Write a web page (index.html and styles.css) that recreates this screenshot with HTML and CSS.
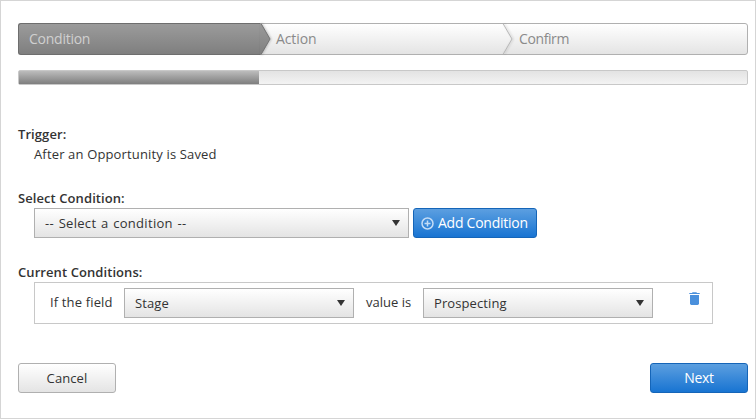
FILE: index.html
```html
<!DOCTYPE html>
<html lang="en">
<head>
    <meta charset="UTF-8" />
    <meta name="viewport" content="width=device-width, initial-scale=1" />
    <title>Condition</title>
    <link rel="stylesheet" href="styles.css">
</head>
<body>
<main class="wizard">
    <ol class="steps">
        <li class="step active">
            <span>Condition</span>
            <svg class="step-arrow" width="14" height="32" viewBox="0 0 14 32">
                <path d="M0 0 H1 L10 16 L1 32 H0 Z" fill="url(#dark)" />
                <path d="M1 0.5 L10 16 L1 31.5" fill="none" stroke="#747474" />
                <defs>
                    <linearGradient id="dark" x1="0" y1="0" x2="0" y2="1">
                        <stop offset="0" stop-color="#9b9b9b" />
                        <stop offset="1" stop-color="#7f7f7f" />
                    </linearGradient>
                </defs>
            </svg>
        </li>
        <li class="step">
            <span class="step-action">Action</span>
            <svg class="step-arrow" width="14" height="32" viewBox="0 0 14 32">
                <path d="M0 0.5 L9 16 L0 31.5" fill="none" stroke="#b8b8b8" />
            </svg>
        </li>
        <li class="step">
            <span class="step-confirm">Confirm</span>
        </li>
    </ol>

    <div class="progress"><div class="progress-bar"></div></div>

    <section class="group trigger">
        <h2>Trigger:</h2>
        <p class="trigger-text">After an Opportunity is Saved</p>
    </section>

    <section class="group">
        <h2>Select Condition:</h2>
        <div class="row">
            <div class="select select-wide">
                <select class="condition-select" aria-label="Condition">
                    <option>-- Select a condition --</option>
                </select>
            </div>
            <button type="button" class="btn btn-primary btn-add">
                <svg width="13" height="13" viewBox="0 0 13 13" fill="none" stroke="#c3dcf6" stroke-width="1.5">
                    <circle cx="6.5" cy="6.5" r="5.5" />
                    <path d="M6.5 3.5 V9.5 M3.5 6.5 H9.5" />
                </svg>
                <span>Add Condition</span>
            </button>
        </div>
    </section>

    <section class="group current">
        <h2>Current Conditions:</h2>
        <div class="condition">
            <span class="field-label">If the field</span>
            <div class="select">
                <select aria-label="Field">
                    <option>Stage</option>
                </select>
            </div>
            <span class="value-label">value is</span>
            <div class="select">
                <select aria-label="Value">
                    <option>Prospecting</option>
                </select>
            </div>
            <button type="button" class="delete" aria-label="Delete">
                <svg width="11" height="13" viewBox="0 0 11 13" fill="#4a90dc">
                    <path d="M0.3 1 H3 L3.6 0.2 H7.4 L8 1 H10.7 V2.1 H0.3 Z" />
                    <path d="M1 3 H10 V11.6 Q10 13 8.6 13 H2.4 Q1 13 1 11.6 Z" />
                </svg>
            </button>
        </div>
    </section>

    <footer class="actions">
        <button type="button" class="btn">Cancel</button>
        <button type="button" class="btn btn-primary">Next</button>
    </footer>
</main>
</body>
</html>
```

FILE: styles.css
```css
* {
    margin: 0;
    padding: 0;
    box-sizing: border-box;
}
body {
    background: #fff;
    color: #333;
    font-family: "Open Sans", "Noto Sans", sans-serif;
    font-size: 13px;
    line-height: 20px;
}
.wizard {
    height: 419px;
    padding: 22px 7px 0 17px;
    border: 1px solid #d5d5d5;
}
.steps {
    display: flex;
    height: 32px;
    list-style: none;
    border: 1px solid #b0b0b0;
    border-radius: 3px;
    background: linear-gradient(#fff, #e4e4e4);
}
.step {
    position: relative;
    flex: 1;
    padding-left: 10px;
    line-height: 30px;
    font-size: 14px;
    letter-spacing: -0.25px;
    color: #8a8a8a;
}
.step.active {
    flex: 0 0 243px;
    margin: -1px 0 -1px -1px;
    border: 1px solid #6e6e6e;
    border-right: 0;
    border-radius: 3px 0 0 3px;
    background: linear-gradient(#9b9b9b, #7f7f7f);
    color: #d0d0d0;
}
.step-action {
    padding-left: 5px;
    letter-spacing: -0.1px;
}
.step-confirm {
    padding-left: 5px;
    letter-spacing: -0.4px;
}
.step-arrow {
    position: absolute;
    top: -1px;
    right: -13px;
    z-index: 1;
    filter: drop-shadow(1px 0 1px rgba(0, 0, 0, 0.2));
}
.progress {
    height: 15px;
    margin-top: 15px;
    border: 1px solid #c8c8c8;
    border-radius: 2px;
    background: linear-gradient(#e3e3e3, #f3f3f3);
}
.progress-bar {
    width: 240px;
    height: 13px;
    background: linear-gradient(#bcbcbc, #7e7e7e);
}
.group {
    margin-top: 24px;
}
.group h2 {
    font-size: 13px;
    font-weight: 600;
    line-height: 20px;
    letter-spacing: 0.08px;
}
.trigger {
    margin-top: 39px;
}
.trigger-text {
    padding-left: 16px;
    letter-spacing: 0.15px;
}
.row {
    display: flex;
    gap: 4px;
    padding-left: 16px;
}
.select {
    position: relative;
    width: 230px;
}
.select-wide {
    width: 375px;
}
.select select {
    display: block;
    width: 100%;
    height: 30px;
    padding-left: 10px;
    border: 1px solid #b0b0b0;
    border-radius: 0;
    background: linear-gradient(#fff, #e4e4e4);
    color: #333;
    font: inherit;
    letter-spacing: 0.1px;
    appearance: none;
}
.select .condition-select {
    letter-spacing: 0.3px;
    word-spacing: 1px;
}
.select::after {
    content: "";
    position: absolute;
    top: 12px;
    right: 9px;
    border: 4px solid transparent;
    border-top: 6px solid #333;
    border-bottom: 0;
}
.btn {
    width: 98px;
    height: 30px;
    border: 1px solid #b0b0b0;
    border-radius: 3px;
    background: linear-gradient(#fff, #e4e4e4);
    color: #333;
    font: inherit;
    letter-spacing: 0.1px;
}
.btn-primary {
    border-color: #1565b8;
    background: linear-gradient(#5c9fe0, #1874d2);
    color: #fff;
    font-size: 14px;
    letter-spacing: -0.25px;
}
.btn-add {
    display: flex;
    align-items: center;
    gap: 4px;
    width: 124px;
    padding-left: 7px;
    white-space: nowrap;
}
.current {
    margin-top: 24px;
}
.condition {
    display: flex;
    width: 679px;
    height: 42px;
    margin-left: 16px;
    padding: 5px 12px 5px 15px;
    border: 1px solid #c8c8c8;
}
.field-label {
    width: 74px;
    padding-top: 4px;
    letter-spacing: 0.15px;
}
.value-label {
    width: 69px;
    padding: 4px 0 0 12px;
}
.delete {
    display: block;
    height: 13px;
    margin: 4px 0 0 auto;
    border: 0;
    background: none;
    line-height: 0;
}
.actions {
    display: flex;
    justify-content: space-between;
    margin-top: 39px;
}
```
